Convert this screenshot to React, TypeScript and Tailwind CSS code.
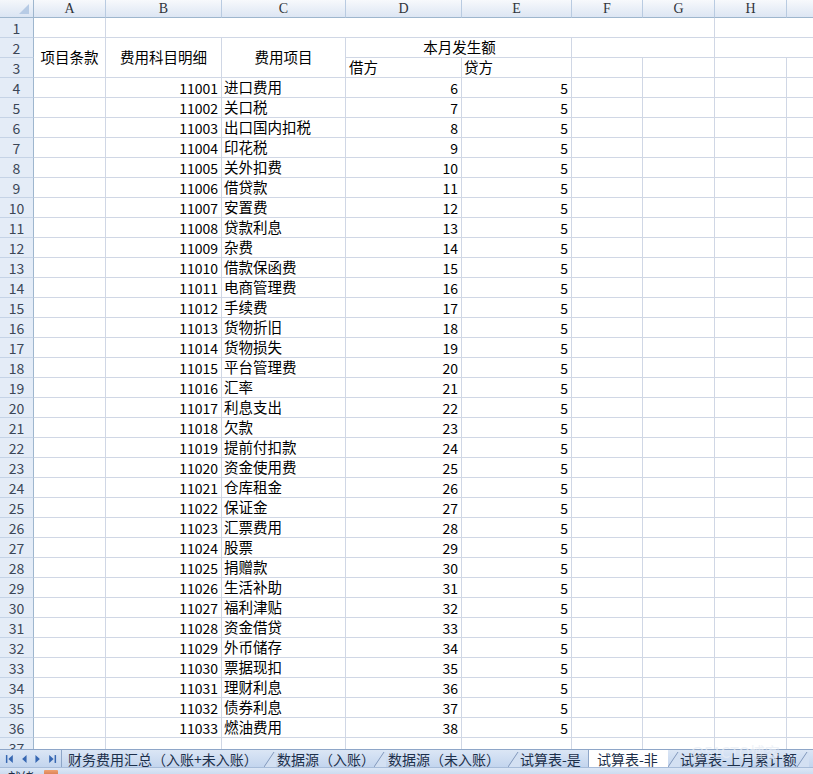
const items: [string, number][] = [
  ["进口费用", 6],
  ["关口税", 7],
  ["出口国内扣税", 8],
  ["印花税", 9],
  ["关外扣费", 10],
  ["借贷款", 11],
  ["安置费", 12],
  ["贷款利息", 13],
  ["杂费", 14],
  ["借款保函费", 15],
  ["电商管理费", 16],
  ["手续费", 17],
  ["货物折旧", 18],
  ["货物损失", 19],
  ["平台管理费", 20],
  ["汇率", 21],
  ["利息支出", 22],
  ["欠款", 23],
  ["提前付扣款", 24],
  ["资金使用费", 25],
  ["仓库租金", 26],
  ["保证金", 27],
  ["汇票费用", 28],
  ["股票", 29],
  ["捐赠款", 30],
  ["生活补助", 31],
  ["福利津贴", 32],
  ["资金借贷", 33],
  ["外币储存", 34],
  ["票据现扣", 35],
  ["理财利息", 36],
  ["债券利息", 37],
  ["燃油费用", 38],
];

const colLetters = ["A", "B", "C", "D", "E", "F", "G", "H", ""];

const cell = "border-r border-b border-[#d0d7e5]";
const rowHead =
  "bg-[#e4ecf7] border-r border-r-[#9eb6ce] border-b border-b-[#c5d3e6] flex items-center justify-center text-[14px] leading-none text-[#3b4656]";

function RowHead({ n }: { n: number }) {
  return <div className={rowHead}>{n}</div>;
}

function Slash({ active }: { active?: boolean }) {
  return (
    <svg width="12" height="18" viewBox="0 0 12 18" className="shrink-0">
      <polygon points="0,17 10,2 12,2 12,17" fill={active ? "#ffffff" : "#d3e0f2"} />
      <line x1="0" y1="17" x2="10" y2="2" stroke="#8299bd" strokeWidth="1" />
    </svg>
  );
}

function NavButtons() {
  return (
    <div className="w-[62px] h-full flex items-center border-r border-[#8ea6c8]">
      <svg width="62" height="18" viewBox="0 0 62 18" fill="#3667b2">
        <rect x="6" y="5" width="1.5" height="8" />
        <polygon points="13,5 13,13 8.5,9" />
        <polygon points="27,5 27,13 22.5,9" />
        <polygon points="36,5 36,13 40.5,9" />
        <polygon points="50,5 50,13 54.5,9" />
        <rect x="55.5" y="5" width="1.5" height="8" />
      </svg>
    </div>
  );
}

export default function App() {
  return (
    <div className="w-[813px] h-[774px] overflow-hidden bg-white flex flex-col font-['Noto_Sans_CJK_SC',sans-serif] text-black relative">
      <div className="h-[749px] overflow-hidden shrink-0">
        <div className="grid grid-cols-[34px_72px_116px_124px_116px_110px_71px_72px_72px_40px] grid-rows-[18px_repeat(37,20px)] text-[14.5px] leading-none">
          {/* column headers */}
          <div className="bg-gradient-to-b from-[#f4f7fb] to-[#dbe5f3] border-r border-b border-[#9eb6ce] relative">
            <svg width="34" height="17" className="absolute left-0 top-0">
              <polygon points="29,4 29,14 19,14" fill="#b7cbe5" />
            </svg>
          </div>
          {colLetters.map((c, i) => (
            <div
              key={i}
              className="bg-gradient-to-b from-[#f7f9fc] to-[#dde6f3] border-r border-r-[#b9cbe1] border-b border-b-[#9eb6ce] flex items-center justify-center font-['Liberation_Serif',serif] text-[14px] text-[#30343a]"
            >
              {c}
            </div>
          ))}

          {/* row 1 */}
          <RowHead n={1} />
          <div className={cell} />
          <div className={`${cell} col-span-6`} />
          <div className="col-span-2 border-b border-[#d0d7e5]" />

          {/* row 2 */}
          <RowHead n={2} />
          <div className={`${cell} row-span-2 flex items-center justify-center`}>项目条款</div>
          <div className={`${cell} row-span-2 flex items-center justify-center`}>费用科目明细</div>
          <div className={`${cell} row-span-2 flex items-center justify-center`}>费用项目</div>
          <div className={`${cell} col-span-2 flex items-center justify-center pl-[2px]`}>本月发生额</div>
          <div className={`${cell} col-span-2`} />
          <div className="col-span-2 border-b border-[#d0d7e5]" />

          {/* row 3 */}
          <RowHead n={3} />
          <div className={`${cell} flex items-center pl-[3px]`}>借方</div>
          <div className={`${cell} flex items-center pl-[2px]`}>贷方</div>
          <div className={cell} />
          <div className={cell} />
          <div className={cell} />
          <div className={cell} />

          {/* data rows */}
          {items.map(([name, debit], i) => (
            <div key={i} className="contents">
              <RowHead n={i + 4} />
              <div className={cell} />
              <div className={`${cell} flex items-center justify-end pr-[3px] text-[14px]`}>{11001 + i}</div>
              <div className={`${cell} flex items-center pl-[2px] whitespace-nowrap`}>{name}</div>
              <div className={`${cell} flex items-center justify-end pr-[3px] text-[14px]`}>{debit}</div>
              <div className={`${cell} flex items-center justify-end pr-[3px] text-[14px]`}>5</div>
              <div className={cell} />
              <div className={cell} />
              <div className={cell} />
              <div className={cell} />
            </div>
          ))}

          {/* row 37 */}
          <RowHead n={37} />
          <div className={cell} />
          <div className={cell} />
          <div className={cell} />
          <div className={cell} />
          <div className={cell} />
          <div className={cell} />
          <div className={cell} />
          <div className={cell} />
          <div className={cell} />
        </div>
      </div>

      {/* sheet tabs */}
      <div className="h-[18px] shrink-0 flex items-stretch bg-gradient-to-b from-[#dbe6f5] to-[#c3d5ee] border-t border-[#8ea6c8] text-[14px] leading-none text-[#1c2f4a] whitespace-nowrap">
        <NavButtons />
        <div className="w-[202px] flex items-center pl-[6px] overflow-hidden">财务费用汇总（入账+未入账）</div>
        <div className="w-[110px] flex items-center overflow-hidden">
          <Slash />
          <span className="pl-[1px]">数据源（入账）</span>
        </div>
        <div className="w-[134px] flex items-center overflow-hidden">
          <Slash />
          <span className="pl-[2px]">数据源（未入账）</span>
        </div>
        <div className="w-[80px] flex items-center overflow-hidden">
          <Slash />
          <span>试算表-是</span>
        </div>
        <div className="w-[80px] flex items-center overflow-hidden bg-white border-l border-[#8ea6c8] pl-[8px]">
          <span>试算表-非</span>
        </div>
        <div className="w-[145px] flex items-center overflow-hidden">
          <Slash />
          <span>试算表-上月累计额</span>
          <Slash />
        </div>
      </div>

      {/* status bar */}
      <div className="flex-1 flex items-start bg-gradient-to-b from-[#dce7f6] to-[#cddcf0] border-t border-[#a7bcd9] overflow-hidden">
        <span className="pl-[8px] pt-[2px] text-[13px] leading-none text-[#1c2f4a]">就绪</span>
        <span className="ml-[10px] mt-[2px] w-[14px] h-[8px] bg-gradient-to-b from-[#f0a070] to-[#c86a40] rounded-[1px]" />
      </div>

      <span className="absolute left-[690px] top-[744px] text-[15px] leading-none text-[#e8edf5] opacity-70 pointer-events-none">
        @51CTO博客
      </span>
    </div>
  );
}
